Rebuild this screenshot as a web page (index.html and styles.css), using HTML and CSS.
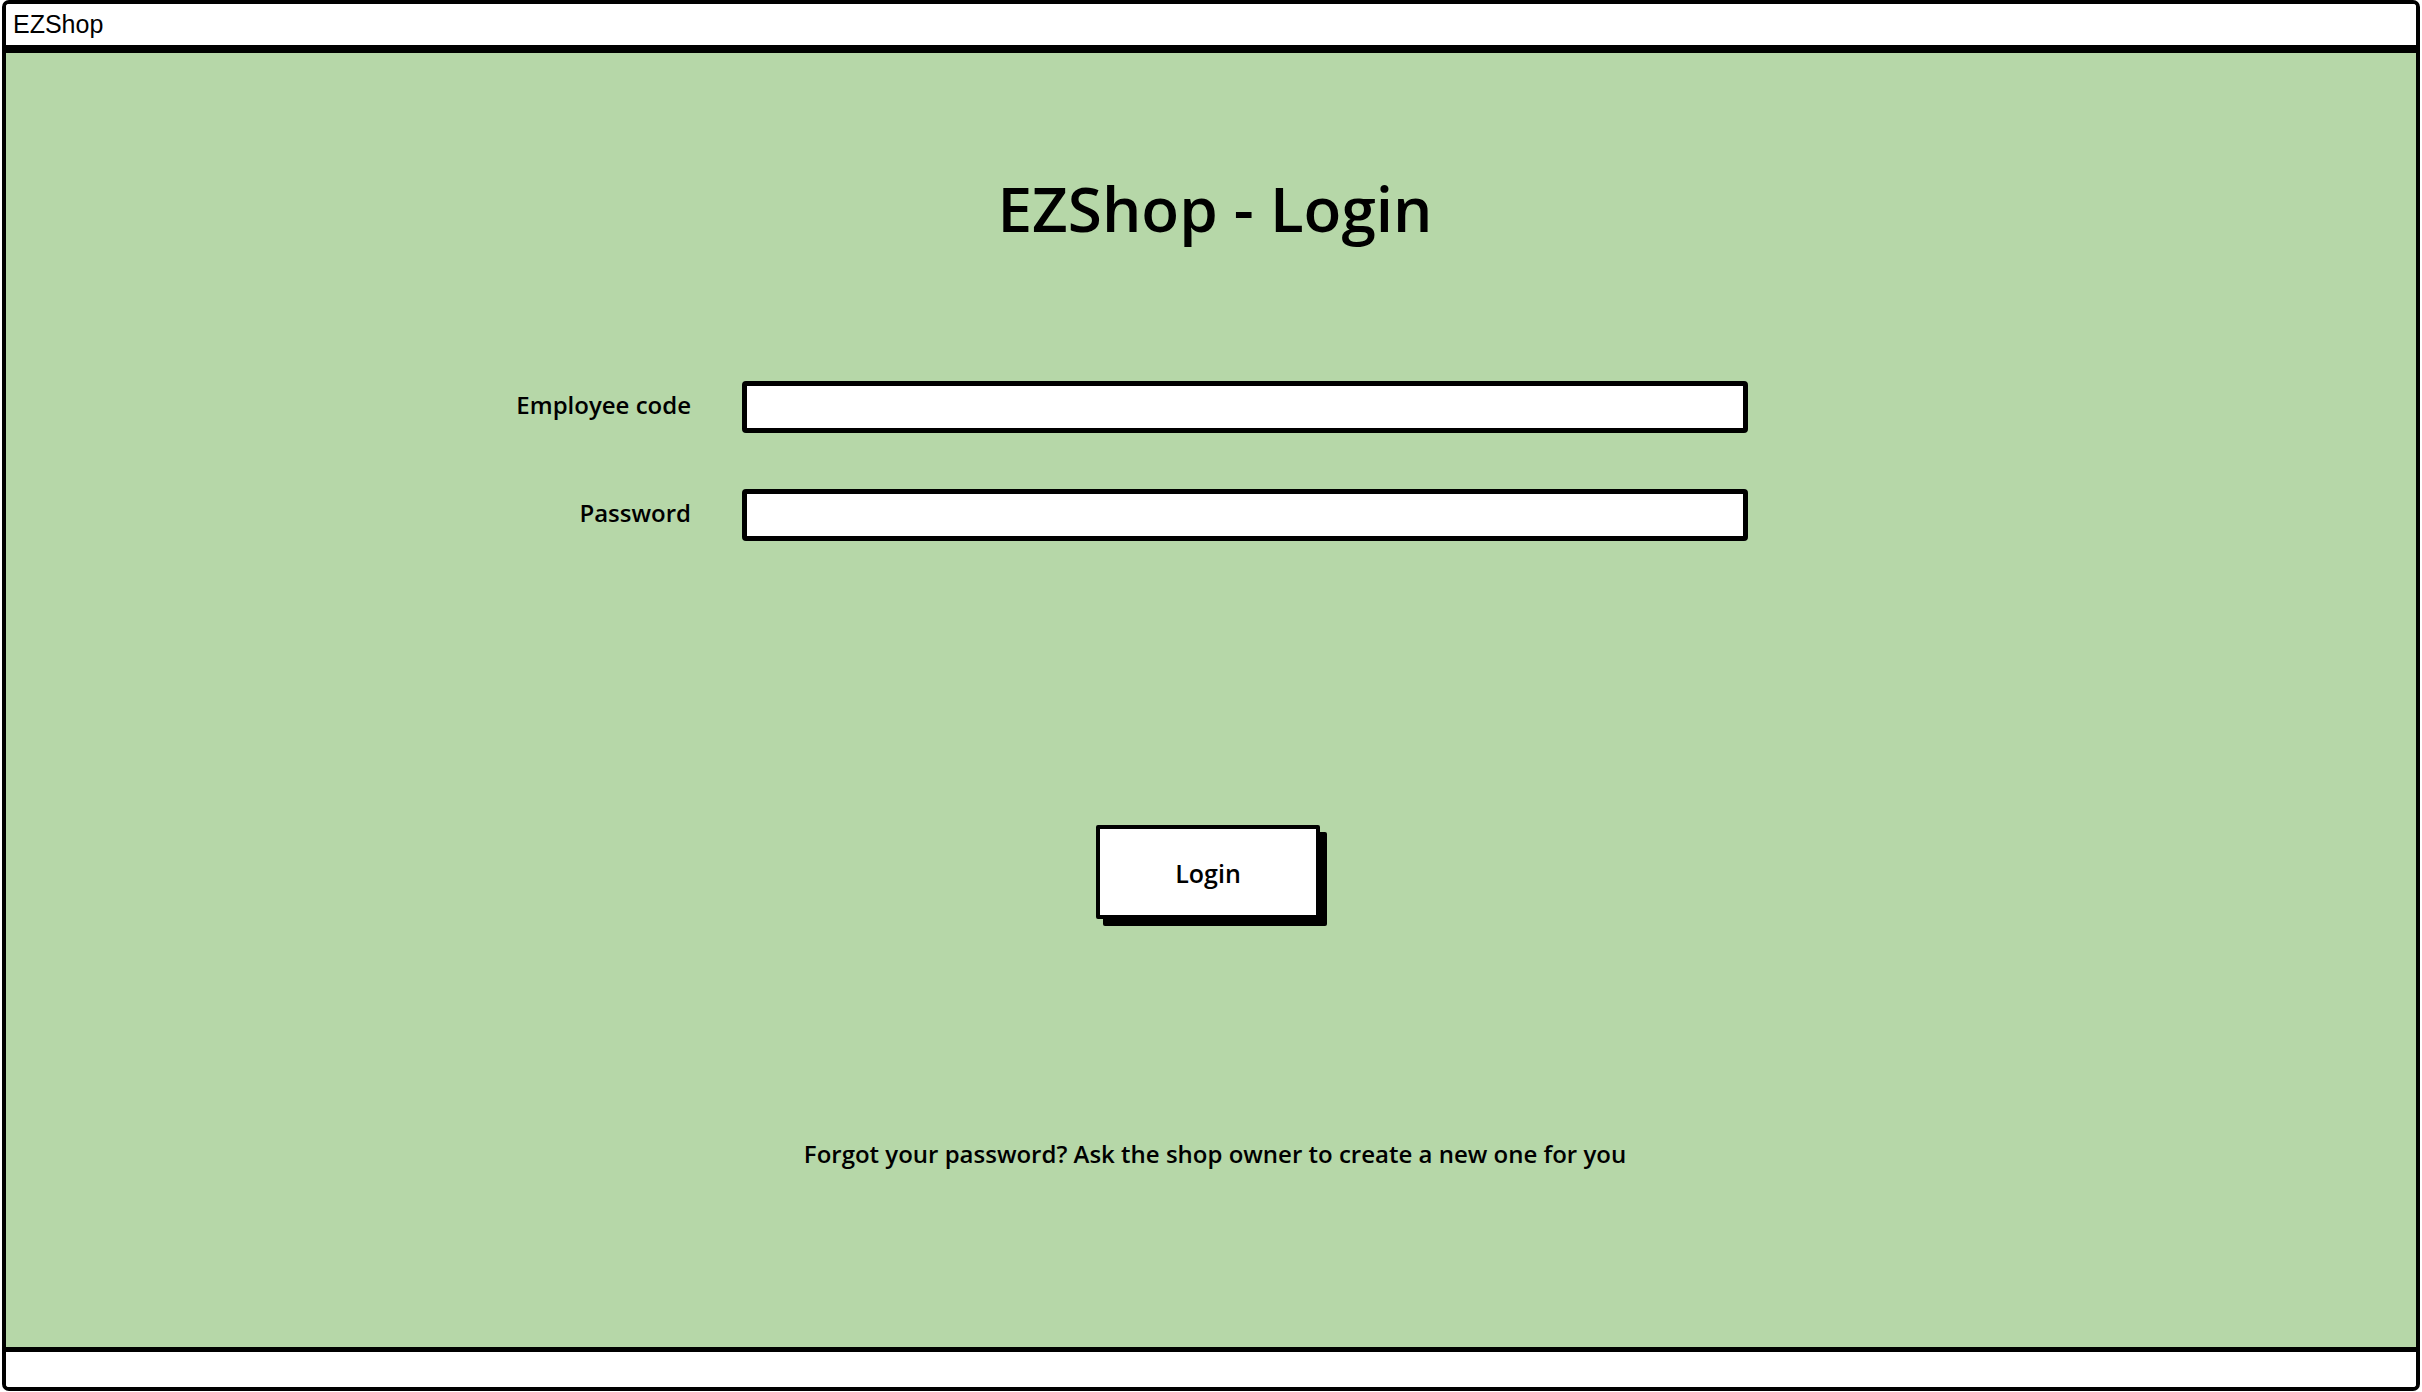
FILE: index.html
```html
<!DOCTYPE html>
<html lang="en">
<head>
<meta charset="utf-8">
<title>EZShop</title>
<link rel="stylesheet" href="styles.css">
</head>
<body>
<div class="window">
  <div class="titlebar">EZShop</div>
  <main class="content">
    <h1 class="heading">EZShop - Login</h1>
    <div class="form">
      <label class="label" for="code">Employee code</label>
      <input class="field" id="code" type="text">
      <label class="label" for="pw">Password</label>
      <input class="field" id="pw" type="password">
    </div>
    <div class="actions">
      <button class="btn" type="button">Login</button>
    </div>
    <p class="hint">Forgot your password? Ask the shop owner to create a new one for you</p>
  </main>
  <div class="statusbar"></div>
</div>
</body>
</html>
```
FILE: styles.css
```css
html, body {
  margin: 0;
  padding: 0;
  background: #ffffff;
}
body {
  width: 2422px;
  height: 1392px;
  overflow: hidden;
}
.window {
  box-sizing: border-box;
  margin: 0 2px 0 2px;
  height: 1391px;
  border: 4px solid #000;
  border-radius: 7px;
  display: flex;
  flex-direction: column;
  overflow: hidden;
  background: #fff;
}
.titlebar {
  height: 41px;
  line-height: 41px;
  padding-left: 7px;
  font-family: "Liberation Sans", Arial, sans-serif;
  font-size: 25px;
  color: #000;
  border-bottom: 8px solid #000;
  background: #fff;
}
.content {
  flex: 1;
  background: #b6d7a8;
  border-bottom: 5px solid #000;
  display: flex;
  flex-direction: column;
  font-family: "Open Sans", sans-serif;
  color: #000;
}
.heading {
  margin: 124px 0 0;
  height: 62px;
  font-size: 62px;
  line-height: 62px;
  font-weight: 600;
  text-align: center;
  padding-left: 8px;
}
.form {
  margin: 142px 0 0 485px;
  display: grid;
  grid-template-columns: 200px 1006px;
  column-gap: 51px;
  row-gap: 56px;
  align-items: center;
}
.label {
  text-align: right;
  font-size: 24px;
  font-weight: 600;
  padding-bottom: 5px;
}
.field {
  box-sizing: border-box;
  height: 52px;
  margin: 0;
  border: 5px solid #000;
  border-radius: 4px;
  background: #fff;
  outline: none;
}
.actions {
  margin-top: 284px;
  display: flex;
  justify-content: center;
  padding-right: 6px;
}
.btn {
  box-sizing: border-box;
  width: 224px;
  height: 94px;
  border: 4px solid #000;
  border-radius: 2px;
  background: #fff;
  box-shadow: 7px 7px 0 #000;
  font-family: "Open Sans", sans-serif;
  font-size: 25px;
  font-weight: 600;
  color: #000;
  padding: 2px 0 0;
}
.hint {
  margin: 220px 0 0;
  font-size: 24px;
  font-weight: 600;
  line-height: 30px;
  text-align: center;
  padding-left: 8px;
}
.statusbar {
  height: 35px;
  background: #fff;
}
```
